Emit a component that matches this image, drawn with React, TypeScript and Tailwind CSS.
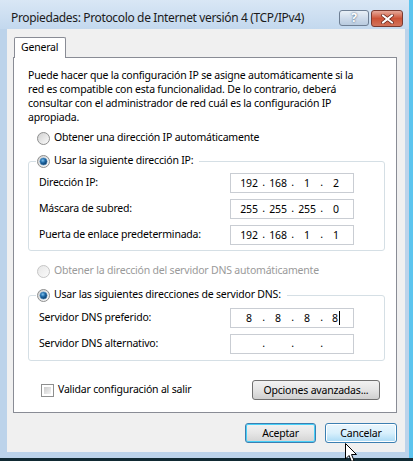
import React from 'react'

function Radio({ checked, disabled }: { checked?: boolean; disabled?: boolean }) {
  return (
    <svg width="13" height="13" viewBox="0 0 13 13" className="flex-shrink-0">
      <defs>
        <linearGradient id={disabled ? 'rgd' : 'rg'} x1="0" y1="0" x2="1" y2="1">
          <stop offset="0%" stopColor={disabled ? '#e6e6e6' : '#cfcfcf'} />
          <stop offset="100%" stopColor={disabled ? '#fbfbfb' : '#fdfdfd'} />
        </linearGradient>
        <radialGradient id="rdot" cx="40%" cy="35%" r="70%">
          <stop offset="0%" stopColor="#7fc3ee" />
          <stop offset="45%" stopColor="#1f6aa8" />
          <stop offset="100%" stopColor="#0b2f55" />
        </radialGradient>
      </defs>
      <circle cx="6.5" cy="6.5" r="6" fill={`url(#${disabled ? 'rgd' : 'rg'})`} stroke={disabled ? '#c5c5c5' : '#8e8f8f'} />
      {checked && <circle cx="6.5" cy="6.5" r="3.6" fill="url(#rdot)" stroke="#4b8ec4" strokeWidth="0.6" />}
    </svg>
  )
}

function IpBox({ parts, caret }: { parts: string[]; caret?: boolean }) {
  return (
    <div className="w-[124px] h-[20px] border border-[#c9cdd3] bg-white flex items-center pl-[6px] text-black">
      {parts.map((p, i) => (
        <React.Fragment key={i}>
          <span className="w-[24px] text-center leading-[18px] flex justify-center">
            {p}
            {caret && i === 3 && <span className="ml-[1px] w-px h-[14px] bg-black self-center" />}
          </span>
          {i < 3 && <span className="w-[5px] text-center">.</span>}
        </React.Fragment>
      ))}
    </div>
  )
}

function Row({ label, parts, caret }: { label: string; parts: string[]; caret?: boolean }) {
  return (
    <div className="flex items-center h-[20px]">
      <span className="flex-1">{label}</span>
      <div className="mr-[30px]">
        <IpBox parts={parts} caret={caret} />
      </div>
    </div>
  )
}

const intro = [
  'Puede hacer que la configuración IP se asigne automáticamente si la',
  'red es compatible con esta funcionalidad. De lo contrario, deberá',
  'consultar con el administrador de red cuál es la configuración IP',
  'apropiada.',
]

export default function App() {
  return (
    <div className="w-[413px] h-[461px] flex flex-col bg-[#5cc4ee] relative overflow-hidden font-['Noto_Sans',sans-serif] text-[10.5px] tracking-[-0.2px] text-black">
      <div className="w-[409px] h-[458px] flex flex-col bg-[#bcd3ea]">
        {/* title bar */}
        <div className="h-[29px] flex items-start pl-[11px] pr-[6px] bg-gradient-to-b from-[#d9e7f5] to-[#c3d8ee]">
          <span className="mt-[9px] text-[12px] tracking-[-0.35px] leading-[17px] text-[#1b1b1b]">
            Propiedades: Protocolo de Internet versión 4 (TCP/IPv4)
          </span>
          <div className="ml-auto mt-[10px] flex gap-[2px]">
            <div className="w-[30px] h-[16px] rounded-[3px] border border-[#6e7f94] bg-gradient-to-b from-[#e9f0f7] via-[#cfdceb] to-[#b9cbdf] flex items-center justify-center text-[12px] font-bold leading-none text-white [text-shadow:0_0_2px_#24405f]">
              ?
            </div>
            <div className="w-[32px] h-[17px] rounded-[3px] border border-[#7a3a30] bg-gradient-to-b from-[#e6a99a] via-[#cc5236] to-[#d2735b] flex items-center justify-center">
              <svg width="13" height="10" viewBox="0 0 13 10">
                <path d="M2 1.5 L11 8.5 M11 1.5 L2 8.5" stroke="#5a1a12" strokeWidth="3.4" strokeLinecap="square" />
                <path d="M2 1.5 L11 8.5 M11 1.5 L2 8.5" stroke="#ffffff" strokeWidth="2" strokeLinecap="square" />
              </svg>
            </div>
          </div>
        </div>

        {/* client area */}
        <div className="h-[423px] ml-[7px] mr-[4px] bg-[#f0f0f0] flex flex-col pl-[6px] pr-[8px] pt-[8px]">
          <div className="flex">
            <div className="ml-[1px] w-[52px] h-[21px] -mb-px border border-b-0 border-[#898c95] bg-white rounded-t-[2px] pl-[6px] leading-[19px] relative z-10">
              General
            </div>
          </div>
          <div className="h-[356px] border border-[#898c95] bg-white flex flex-col pl-[14px] pr-[11px] pt-[10px]">
            <div className="leading-[14px] whitespace-nowrap">
              {intro.map((l) => (
                <div key={l}>{l}</div>
              ))}
            </div>
            <div className="mt-[6px] h-[16px] flex items-center gap-[4px] pl-[9px]">
              <Radio />
              <span>Obtener una dirección IP automáticamente</span>
            </div>

            <fieldset className="mt-[7px] border border-[#d5dfe5] rounded-[3px] pl-[10px] pb-[5px] flex flex-col gap-[6px]">
              <legend className="-ml-[3px] pr-[6px] pl-[1px] h-[16px] flex items-center gap-[4px]">
                <Radio checked />
                <span>Usar la siguiente dirección IP:</span>
              </legend>
              <div className="pt-[4px]">
                <Row label="Dirección IP:" parts={['192', '168', '1', '2']} />
              </div>
              <Row label="Máscara de subred:" parts={['255', '255', '255', '0']} />
              <Row label="Puerta de enlace predeterminada:" parts={['192', '168', '1', '1']} />
            </fieldset>

            <div className="mt-[12px] h-[16px] flex items-center gap-[4px] pl-[9px] text-[#9a9a9a]">
              <Radio disabled />
              <span>Obtener la dirección del servidor DNS automáticamente</span>
            </div>

            <fieldset className="mt-[8px] border border-[#d5dfe5] rounded-[3px] pl-[10px] pb-[6px] flex flex-col gap-[6px]">
              <legend className="-ml-[3px] pr-[6px] pl-[1px] h-[16px] flex items-center gap-[4px]">
                <Radio checked />
                <span>Usar las siguientes direcciones de servidor DNS:</span>
              </legend>
              <div className="pt-[5px]">
                <Row label="Servidor DNS preferido:" parts={['8', '8', '8', '8']} caret />
              </div>
              <Row label="Servidor DNS alternativo:" parts={['', '', '', '']} />
            </fieldset>

            <div className="mt-[19px] h-[20px] flex items-center pl-[13px] pr-[5px]">
              <div className="w-[13px] h-[13px] border border-[#8e8f8f] bg-white p-[2px] flex-shrink-0">
                <div className="w-full h-full bg-gradient-to-br from-[#cbcbcb] to-[#f4f4f4]" />
              </div>
              <span className="ml-[4px]">Validar configuración al salir</span>
              <button className="ml-auto w-[128px] h-[20px] rounded-[3px] border border-[#707070] bg-gradient-to-b from-[#f2f2f2] via-[#e4e4e4] to-[#cfcfcf] leading-none">
                Opciones avanzadas...
              </button>
            </div>
          </div>

          <div className="mt-[10px] flex justify-end gap-[9px]">
            <button className="w-[71px] h-[20px] rounded-[3px] border border-[#3c7fb1] bg-gradient-to-b from-[#f2f2f2] via-[#e6e6e6] to-[#d3d3d3] shadow-[inset_0_0_0_1px_#48d0f8] leading-none">
              Aceptar
            </button>
            <button className="w-[72px] h-[20px] rounded-[3px] border border-[#3c7fb1] bg-gradient-to-b from-[#eaf6fd] via-[#d9f0fc] to-[#a9daf5] shadow-[inset_0_0_0_1px_#ffffff] leading-none">
              Cancelar
            </button>
          </div>
        </div>
        <div className="flex-1" />
      </div>
      <div className="flex-1 bg-[#112a33]" />

      {/* mouse pointer */}
      <svg className="absolute left-[345px] top-[443px]" width="13" height="20" viewBox="0 0 13 20">
        <path d="M0.5 0.5 L0.5 16 L4 12.5 L6.5 18.5 L9 17.5 L6.5 11.5 L11.5 11.5 Z" fill="#ffffff" stroke="#000000" strokeWidth="1" strokeLinejoin="miter" />
      </svg>
    </div>
  )
}
